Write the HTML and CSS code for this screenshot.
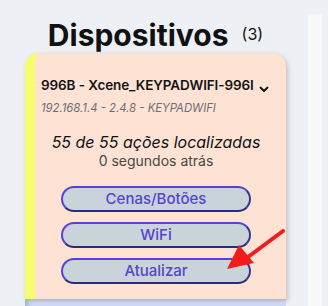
FILE: index.html
```html
<!DOCTYPE html>
<html>
<head>
<meta charset="utf-8">
<link rel="stylesheet" href="styles.css">
</head>
<body>
<div class="page">
  <div class="main">
    <h1 class="title">Dispositivos <span class="count">(3)</span></h1>
    <div class="card">
      <div class="head">
        <div class="name">996B - Xcene_KEYPADWIFI-996I</div>
        <svg class="chev" width="10" height="7" viewBox="0 0 10 7"><path d="M1.5 1.5 L5 5 L8.5 1.5" fill="none" stroke="#111" stroke-width="1.8" stroke-linecap="round" stroke-linejoin="round"/></svg>
      </div>
      <div class="sub">192.168.1.4 - 2.4.8 - KEYPADWIFI</div>
      <div class="status">
        <div class="found">55 de 55 ações localizadas</div>
        <div class="ago">0 segundos atrás</div>
      </div>
      <div class="buttons">
        <button class="btn">Cenas/Botões</button>
        <button class="btn">WiFi</button>
        <button class="btn">Atualizar</button>
      </div>
    </div>
    <div class="card2"></div>
  </div>
  <div class="side"></div>
</div>
<svg class="arrow" width="70" height="50" viewBox="0 0 70 50">
  <line x1="57" y1="6" x2="22" y2="32" stroke="#f21c1c" stroke-width="4" stroke-linecap="round"/>
  <polygon points="1,44 13,20 28,38" fill="#f21c1c"/>
</svg>
</body>
</html>
```
FILE: styles.css
```css
html, body {
  margin: 0;
  padding: 0;
  background: #edf0f5;
  font-family: Inter, "Noto Sans", sans-serif;
  overflow: hidden;
}
.page {
  display: flex;
  width: 328px;
  height: 306px;
}
.main {
  width: 261px;
  margin-left: 25px;
  display: flex;
  flex-direction: column;
}
.title {
  margin: 16px 0 0 0;
  height: 43px;
  text-align: center;
  font-size: 30px;
  font-weight: 700;
  color: #111;
  letter-spacing: 0;
  line-height: 36px;
}
.count {
  font-size: 16px;
  font-weight: 400;
  vertical-align: 6px;
  margin-left: 6px;
}
.card {
  background: #fee3d4;
  border-left: 10px solid #f6fd6c;
  border-radius: 14px 14px 0 0;
  box-shadow: 2px 2px 5px rgba(80, 50, 30, 0.25);
  padding: 23px 15px 15px 6px;
  position: relative;
}
.head {
  display: flex;
  align-items: flex-end;
}
.name {
  font-size: 13.5px;
  font-weight: 600;
  color: #141414;
  line-height: 18px;
  letter-spacing: -0.1px;
  white-space: nowrap;
}
.chev {
  margin: 0 0 1px 5px;
}
.sub {
  font-size: 11.3px;
  font-style: italic;
  color: #6b6b78;
  line-height: 14px;
  margin-top: 7px;
}
.status {
  text-align: center;
  margin-top: 18px;
}
.found {
  font-size: 16px;
  font-style: italic;
  color: #111;
  line-height: 19px;
}
.ago {
  font-size: 14px;
  color: #474747;
  line-height: 17px;
}
.buttons {
  display: flex;
  flex-direction: column;
  align-items: center;
  gap: 10px;
  margin-top: 17px;
}
.btn {
  width: 190px;
  height: 26px;
  border-radius: 13px;
  background: #c8d4d9;
  border: 2px solid #5643d6;
  border-bottom-color: #2f2a78;
  border-right-color: #3d3396;
  color: #5543d6;
  font-family: Inter, "Noto Sans", sans-serif;
  font-size: 15px;
  font-weight: 500;
  padding: 0;
  line-height: 20px;
}
.card2 {
  height: 20px;
  background: #d3dffa;
  box-shadow: inset 6px 0 5px -3px rgba(60, 70, 120, 0.3);
}
.side {
  width: 14px;
  margin-left: 22px;
  margin-top: 14px;
  background: #f8f8f9;
}
.arrow {
  position: absolute;
  left: 226px;
  top: 225px;
}
```
